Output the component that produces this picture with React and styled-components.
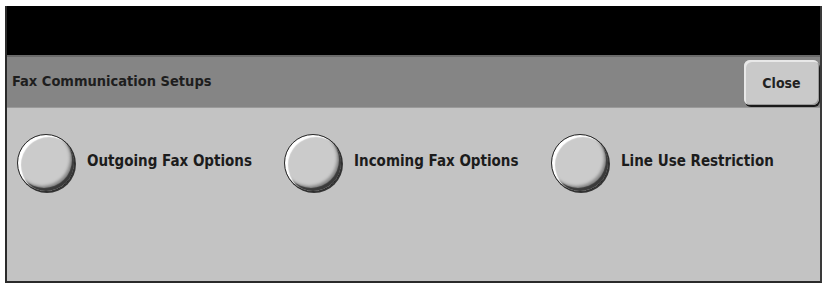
import React from "react";
import styled, { createGlobalStyle } from "styled-components";

const Global = createGlobalStyle`
  html, body { margin: 0; padding: 0; background: #fff; }
  body { width: 826px; height: 287px; overflow: hidden; }
`;

const Frame = styled.div`
  margin: 6px 4px 0 5px;
  width: 817px;
  height: 277px;
  display: flex;
  flex-direction: column;
  border-left: 2px solid #2a2a2a;
  border-right: 2px solid #3a3a3a;
  border-bottom: 2px solid #2a2a2a;
  box-sizing: border-box;
  font-family: "DejaVu Sans Condensed", "Liberation Sans", sans-serif;
`;

const TopBar = styled.div`
  height: 49px;
  background: #000;
  flex: none;
`;

const Header = styled.div`
  height: 53px;
  flex: none;
  background: #858585;
  border-top: 2px solid #6a6a6a;
  border-bottom: 1px solid #9a9a9a;
  box-sizing: border-box;
  display: flex;
  align-items: center;
  justify-content: space-between;
  padding: 0 1px 0 5px;
`;

const Title = styled.div`
  font-size: 14.5px;
  font-weight: bold;
  color: #1e1e1e;
  margin-top: -2px;
`;

const CloseButton = styled.button`
  width: 75px;
  height: 45px;
  margin-top: 1px;
  background: #c9c9c9;
  border: none;
  border-radius: 6px;
  box-shadow: inset 2px 2px 0 #e8e8e8, inset -1px -1px 0 #9a9a9a, 1px 2px 0 #1a1a1a;
  font-family: inherit;
  font-size: 14px;
  font-weight: bold;
  color: #222;
  padding: 0;
`;

const Content = styled.div`
  flex: 1;
  background: #c3c3c3;
  display: flex;
  align-items: flex-start;
  padding: 26px 0 0 10px;
`;

const Option = styled.div`
  display: flex;
  align-items: center;
  width: 267px;
  gap: 12px;
`;

const Radio = styled.div`
  width: 58px;
  height: 58px;
  border-radius: 50%;
  box-sizing: border-box;
  background: #cbcbcb;
  border: 1px solid #2a2a2a;
  box-shadow:
    inset 3px 2px 1px #ffffff,
    inset -2px -3px 1px #3a3a3a,
    inset -4px -5px 3px #8a8a8a,
    1px 1px 0 #333;
  flex: none;
`;

const Label = styled.span`
  font-size: 15px;
  font-weight: bold;
  color: #1c1c1c;
  margin-top: -4px;
  white-space: nowrap;
`;

const options = ["Outgoing Fax Options", "Incoming Fax Options", "Line Use Restriction"];

export default function App() {
  return (
    <>
      <Global />
      <Frame>
        <TopBar />
        <Header>
          <Title>Fax Communication Setups</Title>
          <CloseButton>Close</CloseButton>
        </Header>
        <Content>
          {options.map((o) => (
            <Option key={o}>
              <Radio />
              <Label>{o}</Label>
            </Option>
          ))}
        </Content>
      </Frame>
    </>
  );
}
